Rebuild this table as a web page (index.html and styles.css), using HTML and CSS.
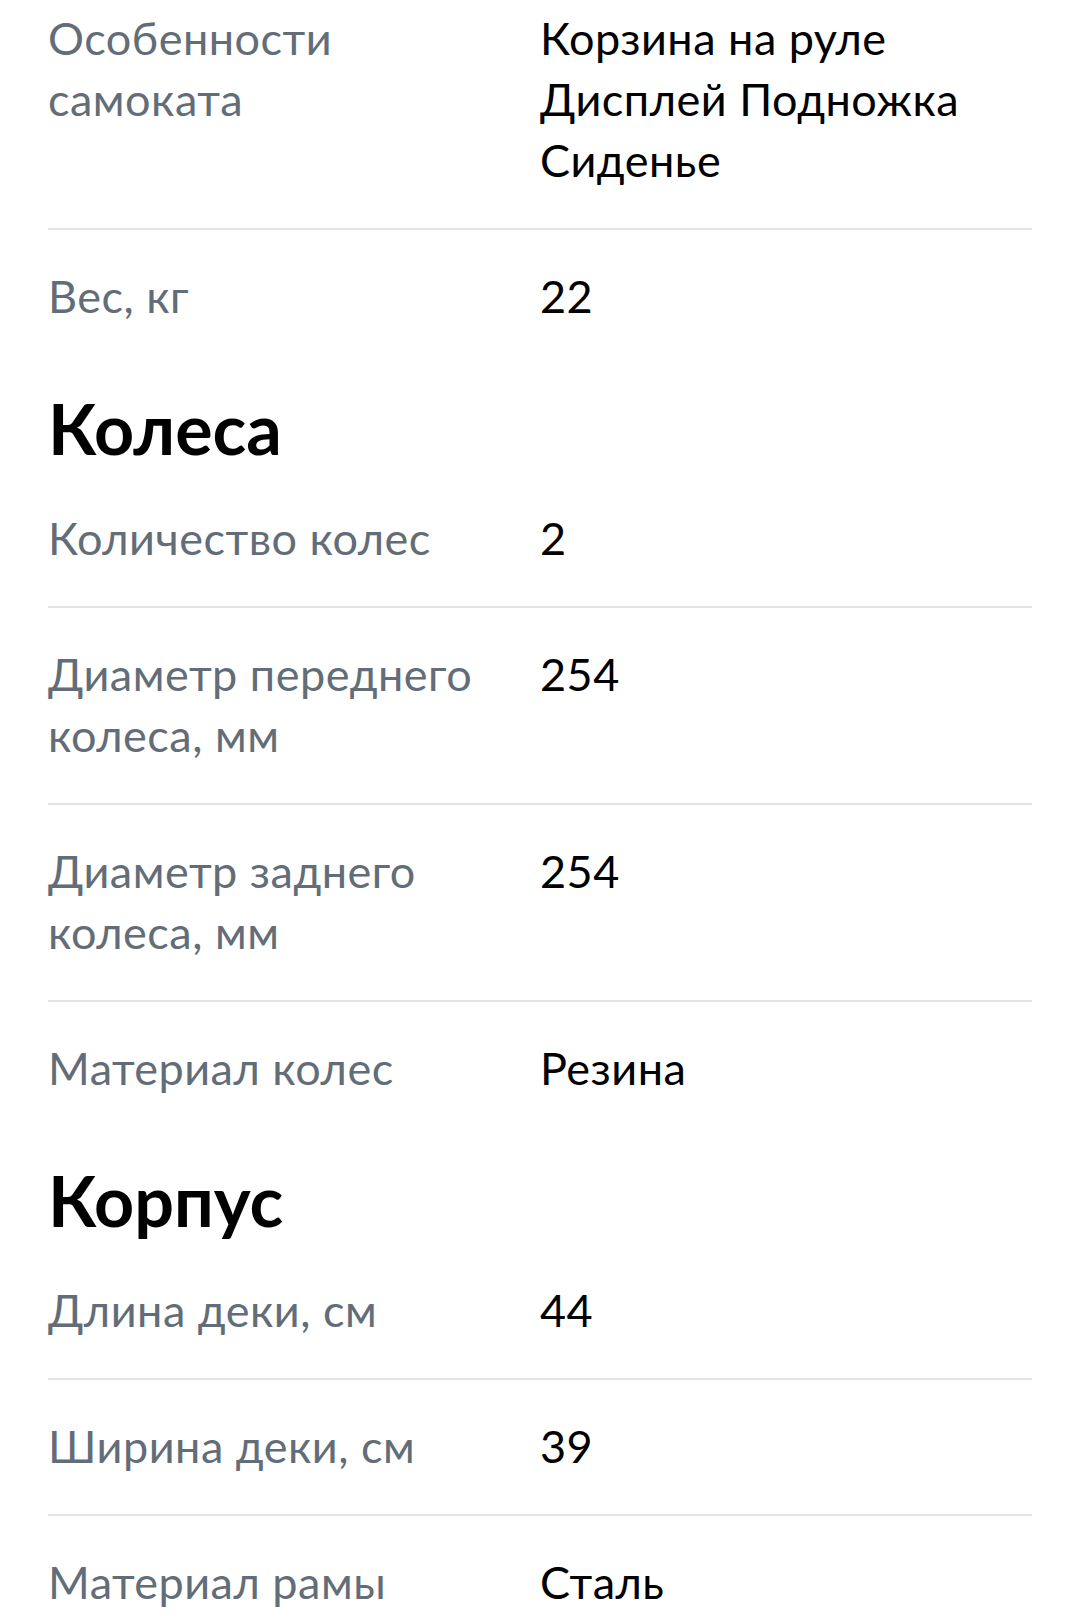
FILE: index.html
```html
<!DOCTYPE html>
<html lang="ru">
<head>
    <meta charset="UTF-8">
    <meta name="viewport" content="width=device-width, initial-scale=1.0">
    <title>Характеристики самоката</title>
    <link rel="stylesheet" href="styles.css">
</head>
<body>
    <main class="specs">
        <section class="spec-group">
            <div class="spec-row">
                <div class="spec-label">Особенности самоката</div>
                <div class="spec-value">Корзина на руле Дисплей Подножка Сиденье</div>
            </div>
            <div class="spec-row">
                <div class="spec-label">Вес, кг</div>
                <div class="spec-value">22</div>
            </div>
        </section>
        <section class="spec-group">
            <h2 class="spec-title">Колеса</h2>
            <div class="spec-row">
                <div class="spec-label">Количество колес</div>
                <div class="spec-value">2</div>
            </div>
            <div class="spec-row">
                <div class="spec-label">Диаметр переднего колеса, мм</div>
                <div class="spec-value">254</div>
            </div>
            <div class="spec-row">
                <div class="spec-label">Диаметр заднего колеса, мм</div>
                <div class="spec-value">254</div>
            </div>
            <div class="spec-row">
                <div class="spec-label">Материал колес</div>
                <div class="spec-value">Резина</div>
            </div>
        </section>
        <section class="spec-group">
            <h2 class="spec-title">Корпус</h2>
            <div class="spec-row">
                <div class="spec-label">Длина деки, см</div>
                <div class="spec-value">44</div>
            </div>
            <div class="spec-row">
                <div class="spec-label">Ширина деки, см</div>
                <div class="spec-value">39</div>
            </div>
            <div class="spec-row">
                <div class="spec-label">Материал рамы</div>
                <div class="spec-value">Сталь</div>
            </div>
        </section>
    </main>
</body>
</html>
```

FILE: styles.css
```css
body {
    font-family: Lato, "Noto Sans", sans-serif;
    background-color: #fff;
    color: #000;
    margin: 0;
    padding: 0;
}
.specs {
    margin-top: -28px;
    padding: 0 48px;
}
.spec-title {
    font-size: 70px;
    font-weight: 700;
    line-height: 80px;
    margin: 0;
    padding: 24px 0 4px;
}
.spec-row {
    display: grid;
    grid-template-columns: 492px 1fr;
    padding: 36px 0 37px;
    font-size: 45px;
    line-height: 61px;
    letter-spacing: 0.5px;
}
.spec-row:not(:last-child) {
    border-bottom: 2px solid #e2e5e8;
}
.spec-label {
    color: #626d78;
    padding-right: 28px;
}
.spec-value {
    color: #000;
}
```
